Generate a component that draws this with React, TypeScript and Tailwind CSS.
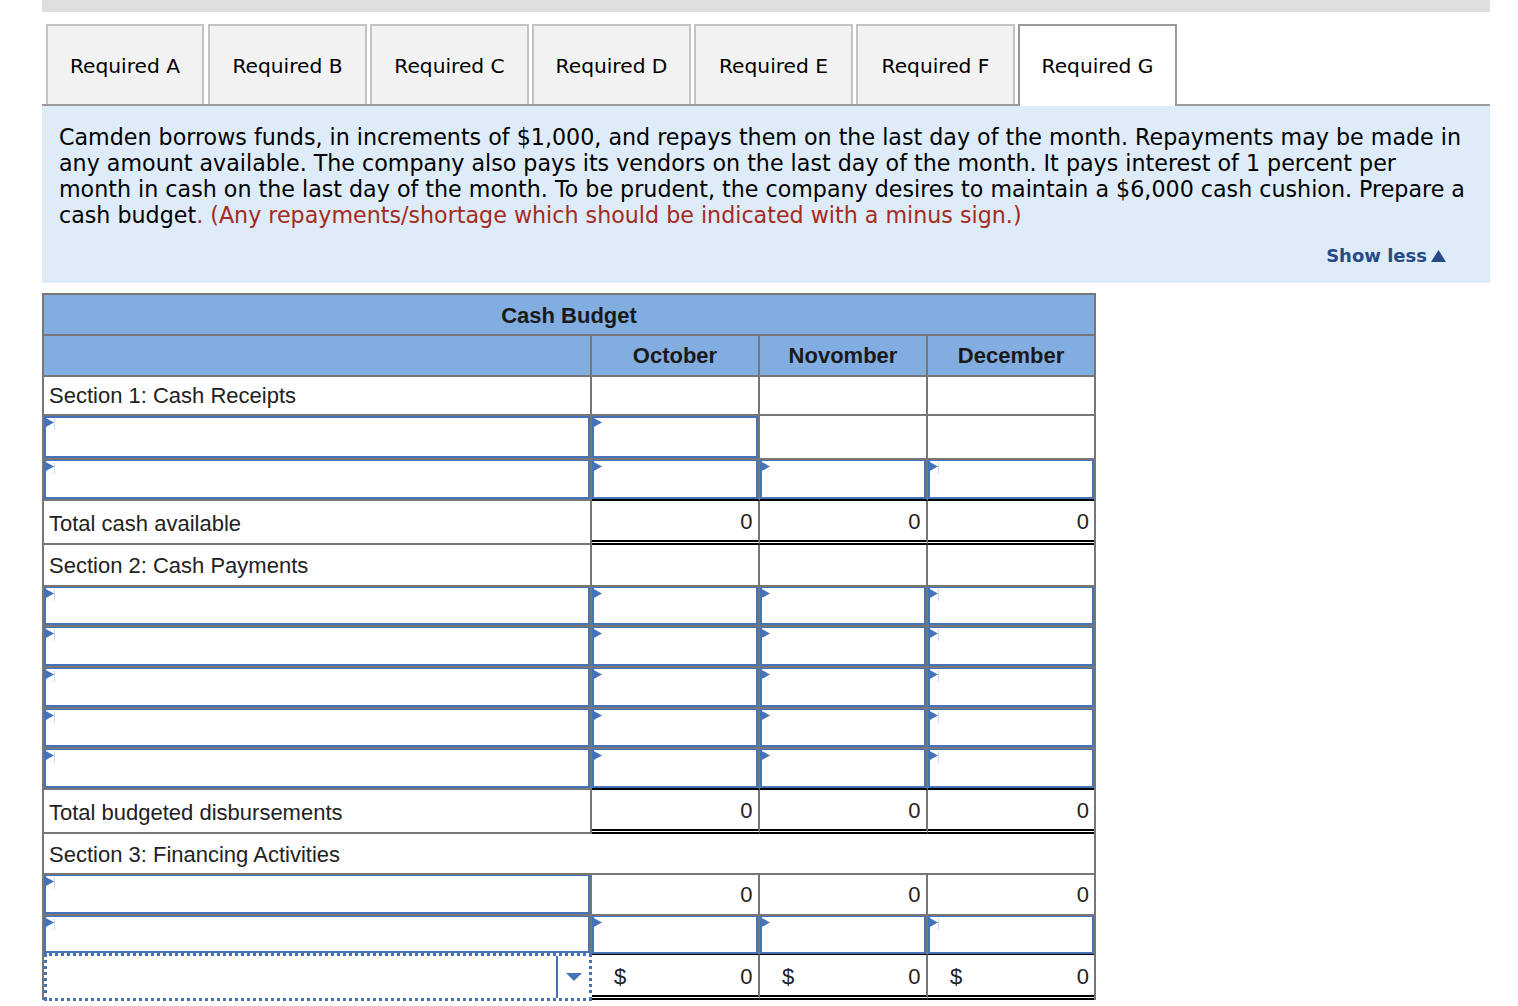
import { ReactNode } from 'react';

const TABS = ['A', 'B', 'C', 'D', 'E', 'F', 'G'];

function Flag({ mark }: { mark?: boolean }) {
  return (
    <>
      <svg className="pointer-events-none absolute top-[1px] left-0 h-[11px] w-[10px]" viewBox="0 0 10 11">
        <path d="M0 0 L10 5.5 L0 11 Z" fill="#4673b8" />
      </svg>
      {mark && <span className="pointer-events-none absolute top-[2px] left-[10px] h-[12px] w-px bg-[#c9daf0]" />}
    </>
  );
}

// 입력칸: 파란 테두리 + 왼쪽 위 삼각형
function InputBox({ mark, thick }: { mark?: boolean; thick?: boolean }) {
  return (
    <div className="relative h-full w-full">
      <input
        type="text"
        className={`block h-full w-full border-x-2 border-b-2 border-[#4673b8] bg-white outline-none ${thick ? 'border-t-2' : 'border-t'}`}
      />
      <Flag mark={mark} />
    </div>
  );
}

function LabelCell({ pad, children }: { pad: string; children?: ReactNode }) {
  return (
    <div className={`flex h-full w-[548px] shrink-0 items-center border-r-2 border-b-2 border-[#777] pl-[5px] ${pad}`}>
      {children}
    </div>
  );
}

function LabelInput({ thick }: { thick?: boolean }) {
  return (
    <div className="h-full w-[548px] shrink-0 border-r-2 border-b-2 border-[#777]">
      <InputBox mark thick={thick} />
    </div>
  );
}

function ValCell({
  last,
  border = 'border-b-2 border-b-[#777]',
  children,
}: {
  last?: boolean;
  border?: string;
  children?: ReactNode;
}) {
  return (
    <div
      className={`h-full ${last ? 'w-[166px]' : 'w-[168px] border-r-2 border-r-[#777]'} shrink-0 ${border}`}
    >
      {children}
    </div>
  );
}

function Zero({ dollar, last, plain }: { dollar?: boolean; last?: boolean; plain?: boolean }) {
  return (
    <div
      className={`flex h-full items-center justify-between pl-[22px] ${last ? 'pr-[5px]' : 'pr-[5.5px]'} ${plain ? '' : 'pt-[2px]'}`}
    >
      <span>{dollar ? '$' : ''}</span>
      <span>0</span>
    </div>
  );
}

function InputRow({ height, valueBorder }: { height: string; valueBorder: string }) {
  return (
    <div className={`flex ${height}`}>
      <LabelInput />
      <ValCell border={valueBorder}>
        <InputBox />
      </ValCell>
      <ValCell border={valueBorder}>
        <InputBox />
      </ValCell>
      <ValCell last border={valueBorder}>
        <InputBox mark />
      </ValCell>
    </div>
  );
}

const GRAY = 'border-b-2 border-b-[#777]';
const BLACK = 'border-b-2 border-b-black';
const DOUBLE = 'border-b-[5px] border-double border-b-black';

function TotalRow({ label, height }: { label: string; height: string }) {
  return (
    <div className={`flex ${height}`}>
      <LabelCell pad="pt-[3px]">{label}</LabelCell>
      <ValCell border={DOUBLE}>
        <Zero />
      </ValCell>
      <ValCell border={DOUBLE}>
        <Zero />
      </ValCell>
      <ValCell last border={DOUBLE}>
        <Zero last />
      </ValCell>
    </div>
  );
}

function SectionRow({ label, height, pad }: { label: string; height: string; pad: string }) {
  return (
    <div className={`flex ${height}`}>
      <LabelCell pad={pad}>{label}</LabelCell>
      <ValCell />
      <ValCell />
      <ValCell last />
    </div>
  );
}

export default function App() {
  return (
    <div className="min-h-[1006px] w-[1518px] bg-white pr-[28px] pl-[42px] font-['Liberation_Sans',sans-serif] text-[#222]">
      <div className="h-3 bg-[#dedede]" />

      {/* 탭 */}
      <div className="mt-3 flex h-[82px] gap-[3px] border-b-2 border-[#999] pl-1 font-['DejaVu_Sans',sans-serif] text-[20.2px] text-black">
        {TABS.map((t) => (
          <div
            key={t}
            className={
              t === 'G'
                ? 'relative z-10 flex h-[82px] w-[159px] items-center justify-center border-2 border-b-0 border-[#999] bg-white'
                : t === 'A'
                  ? 'mr-px flex h-[80px] w-[158px] items-center justify-center border-2 border-b-0 border-[#c4c4c4] bg-[#f2f2f2] pt-[2px]'
                  : 'flex h-[80px] w-[159px] items-center justify-center border-2 border-b-0 border-[#c4c4c4] bg-[#f2f2f2] pt-[2px]'
            }
          >
            Required {t}
          </div>
        ))}
      </div>

      {/* 안내 문구 */}
      <div className="h-[177px] bg-[#deebf8] px-[17px] pt-[18px] font-['DejaVu_Sans',sans-serif] text-[22.2px] leading-[26px] text-black">
        <p className="whitespace-nowrap">
          Camden borrows funds, in increments of $1,000, and repays them on the last day of the month. Repayments may be made in
          <br />
          any amount available. The company also pays its vendors on the last day of the month. It pays interest of 1 percent per
          <br />
          month in cash on the last day of the month. To be prudent, the company desires to maintain a $6,000 cash cushion. Prepare a
          <br />
          cash budget<span className="text-[#a52a20]">. (Any repayments/shortage which should be indicated with a minus sign.)</span>
        </p>
        <div className="mt-[15px] flex items-center justify-end gap-[4px] pr-[27px] text-[18px] leading-[26px] font-bold text-[#254a85]">
          Show less
          <svg className="h-[12px] w-[15px]" viewBox="0 0 15 12">
            <path d="M7.5 0 L15 12 L0 12 Z" fill="#254a85" />
          </svg>
        </div>
      </div>

      {/* 현금 예산 표 */}
      <div className="mt-[10px] w-[1054px] border-x-2 border-t-2 border-[#777] text-[22px]">
        <div className="flex h-[41px] items-center justify-center border-b-2 border-[#777] bg-[#82ade0] pt-[2px] font-bold text-[#1a1a1a]">
          Cash Budget
        </div>
        <div className="flex h-[41px] border-b-2 border-[#777] bg-[#82ade0] font-bold text-[#1a1a1a]">
          <div className="w-[548px] shrink-0 border-r-2 border-[#777]" />
          <div className="flex w-[168px] items-center justify-center border-r-2 border-[#777]">October</div>
          <div className="flex w-[168px] items-center justify-center border-r-2 border-[#777]">Novomber</div>
          <div className="flex w-[166px] items-center justify-center">December</div>
        </div>

        <SectionRow label="Section 1: Cash Receipts" height="h-[39px]" pad="pt-0" />

        <div className="flex h-[44px]">
          <LabelInput thick />
          <ValCell>
            <InputBox thick />
          </ValCell>
          <ValCell />
          <ValCell last />
        </div>

        <InputRow height="h-[41px]" valueBorder={BLACK} />
        <TotalRow label="Total cash available" height="h-[44px]" />
        <SectionRow label="Section 2: Cash Payments" height="h-[42px]" pad="pt-px" />

        <InputRow height="h-[40px]" valueBorder={GRAY} />
        <InputRow height="h-[41px]" valueBorder={GRAY} />
        <InputRow height="h-[41px]" valueBorder={GRAY} />
        <InputRow height="h-[40px]" valueBorder={GRAY} />
        <InputRow height="h-[41px]" valueBorder={BLACK} />

        <TotalRow label="Total budgeted disbursements" height="h-[44px]" />

        <div className="flex h-[41px] items-center border-b-2 border-[#777] pt-[2px] pl-[5px]">
          Section 3: Financing Activities
        </div>

        <div className="flex h-[41px]">
          <LabelInput />
          <ValCell>
            <Zero plain />
          </ValCell>
          <ValCell>
            <Zero plain />
          </ValCell>
          <ValCell last>
            <Zero plain last />
          </ValCell>
        </div>

        <div className="flex h-[39px]">
          <div className="h-full w-[548px] shrink-0 border-r-2 border-[#777] pb-[2px]">
            <InputBox mark />
          </div>
          <ValCell border="border-b border-b-black">
            <InputBox />
          </ValCell>
          <ValCell border="border-b border-b-black">
            <InputBox />
          </ValCell>
          <ValCell last border="border-b border-b-black">
            <InputBox mark />
          </ValCell>
        </div>

        <div className="flex h-[45px]">
          {/* 드롭다운: 점선 포커스 테두리 */}
          <div className="relative z-10 -mt-0.5 flex h-[48px] w-[548px] shrink-0 border-[3px] border-dotted border-[#4673b8] bg-white">
            <div className="flex-1 border-r-2 border-[#4673b8]" />
            <div className="flex w-[31px] items-center justify-center">
              <svg className="h-[8px] w-[16px]" viewBox="0 0 16 8">
                <path d="M0 0 L16 0 L8 8 Z" fill="#4673b8" />
              </svg>
            </div>
          </div>
          <ValCell border={DOUBLE}>
            <Zero dollar />
          </ValCell>
          <ValCell border={DOUBLE}>
            <Zero dollar />
          </ValCell>
          <ValCell last border={DOUBLE}>
            <Zero dollar last />
          </ValCell>
        </div>
      </div>
    </div>
  );
}
